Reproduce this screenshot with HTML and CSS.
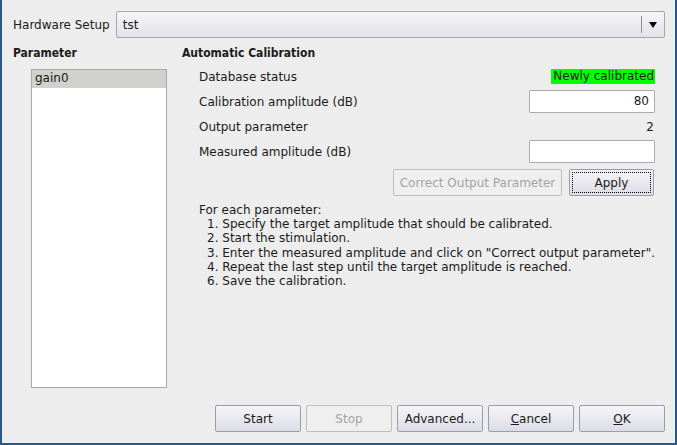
FILE: index.html
```html
<!DOCTYPE html>
<html>
<head>
<meta charset="utf-8">
<link rel="stylesheet" href="styles.css">
</head>
<body>
<div class="window">
  <div class="top-row">
    <span class="label">Hardware Setup</span>
    <div class="combo">
      <span class="combo-text">tst</span>
      <span class="combo-sep"></span>
      <span class="combo-arrow"></span>
    </div>
  </div>
  <div class="middle">
    <div class="left-col">
      <div class="header">Parameter</div>
      <div class="list">
        <div class="list-item selected">gain0</div>
      </div>
    </div>
    <div class="right-col">
      <div class="header">Automatic Calibration</div>
      <div class="form">
        <div class="form-row">
          <span>Database status</span>
          <span class="status">Newly calibrated</span>
        </div>
        <div class="form-row">
          <span>Calibration amplitude (dB)</span>
          <div class="input">80</div>
        </div>
        <div class="form-row">
          <span>Output parameter</span>
          <span class="value">2</span>
        </div>
        <div class="form-row">
          <span>Measured amplitude (dB)</span>
          <div class="input"></div>
        </div>
        <div class="action-row">
          <button class="btn disabled wide">Correct Output Parameter</button>
          <button class="btn focus apply">Apply</button>
        </div>
      </div>
      <div class="instructions">
        <div>For each parameter:</div>
        <div class="step">1. Specify the target amplitude that should be calibrated.</div>
        <div class="step">2. Start the stimulation.</div>
        <div class="step">3. Enter the measured amplitude and click on "Correct output parameter".</div>
        <div class="step">4. Repeat the last step until the target amplitude is reached.</div>
        <div class="step">6. Save the calibration.</div>
      </div>
    </div>
  </div>
  <div class="bottom-row">
    <button class="btn">Start</button>
    <button class="btn disabled">Stop</button>
    <button class="btn">Advanced...</button>
    <button class="btn"><u>C</u>ancel</button>
    <button class="btn"><u>O</u>K</button>
  </div>
</div>
</body>
</html>
```

FILE: styles.css
```css
* { box-sizing: border-box; }
html, body { margin: 0; padding: 0; }
body {
  width: 677px;
  height: 445px;
  overflow: hidden;
  font-family: "DejaVu Sans", sans-serif;
  font-size: 12px;
  color: #1b1b1b;
}
.window {
  width: 677px;
  height: 445px;
  background: #ededed;
  border-left: 2px solid #285883;
  border-right: 2px solid #285883;
  border-bottom: 2px solid #285883;
  padding: 11px 10px 11px 11px;
  display: flex;
  flex-direction: column;
}
.btn {
  font-family: "DejaVu Sans", sans-serif;
}
.header {
  font-family: "DejaVu Sans Condensed", "DejaVu Sans", sans-serif;
  font-stretch: condensed;
  font-weight: bold;
  height: 16px;
  line-height: 16px;
}
.top-row {
  display: flex;
  align-items: center;
  gap: 6px;
  height: 27px;
}
.label { line-height: 15px; padding-top: 1px; }
.combo {
  flex: 1;
  height: 27px;
  border: 1px solid #a4a4b2;
  border-radius: 2px;
  background: linear-gradient(#f6f6f9, #e2e2ea);
  display: flex;
  align-items: center;
  padding-left: 6px;
}
.combo-text { flex: 1; }
.combo-sep {
  width: 1px;
  height: 17px;
  background: #8f8f9a;
  margin-right: 7px;
}
.combo-arrow {
  width: 0;
  height: 0;
  border-left: 4.5px solid transparent;
  border-right: 4.5px solid transparent;
  border-top: 6px solid #000;
  margin-right: 7px;
}
.middle {
  display: flex;
  margin-top: 7px;
  flex: 1;
}
.left-col {
  width: 169px;
}
.list {
  margin-top: 8px;
  margin-left: 18px;
  width: 136px;
  height: 319px;
  background: #fff;
  border: 1px solid #a9a9a9;
}
.list-item {
  height: 18px;
  line-height: 17px;
  padding-left: 3px;
}
.list-item.selected {
  background: #d0d0cc;
}
.right-col {
  flex: 1;
}
.form {
  margin-top: 4px;
  margin-left: 17px;
  width: 456px;
  display: flex;
  flex-direction: column;
  gap: 2px;
}
.form-row {
  height: 23px;
  display: flex;
  align-items: center;
  justify-content: space-between;
}
.status {
  background: #00ff00;
  padding: 0 1px 0 2px;
  height: 15px;
  line-height: 15px;
}
.value { padding-right: 1px; }
.input {
  width: 126px;
  height: 23px;
  background: #fff;
  border: 1px solid #ababab;
  border-radius: 1px;
  text-align: right;
  line-height: 21px;
  padding-right: 5px;
}
.action-row {
  display: flex;
  justify-content: flex-end;
  gap: 7px;
  margin-top: 4px;
  padding-right: 1px;
}
.btn {
  height: 27px;
  width: 86px;
  font-size: 12px;
  color: #1b1b1b;
  border: 1px solid #9c9cab;
  border-radius: 2px;
  background: linear-gradient(#f5f5f8, #dcdce6);
  padding: 0;
}
.btn.disabled {
  color: #a3a3a3;
  background: #efefef;
  border-color: #bdbdbd;
}
.btn.wide { width: 169px; }
.btn.apply { width: 85px; }
.btn.focus {
  outline: 1px dotted #000;
  outline-offset: -4px;
}
.instructions {
  margin-top: 7px;
  margin-left: 17px;
  line-height: 14.2px;
}
.step { padding-left: 8px; }
.bottom-row {
  display: flex;
  justify-content: flex-end;
  gap: 5px;
}
```
